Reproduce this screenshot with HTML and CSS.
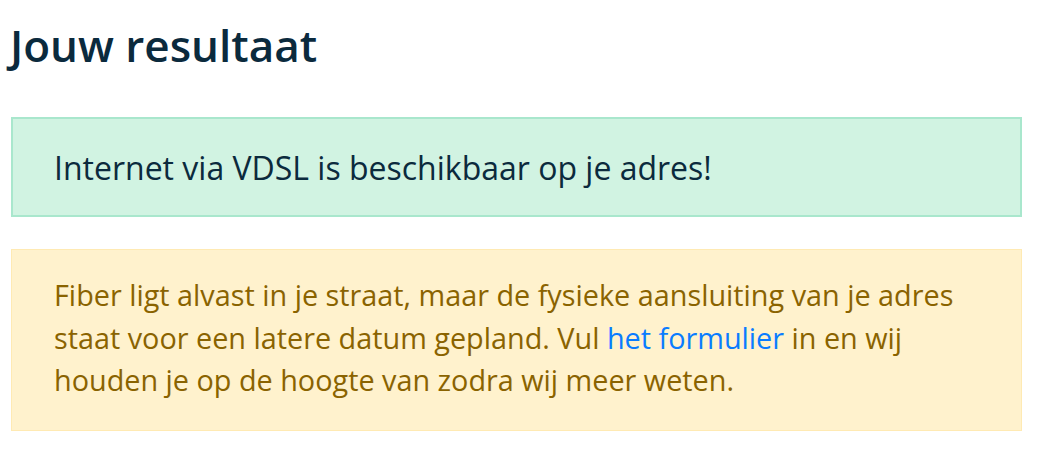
FILE: index.html
```html
<!DOCTYPE html>
<html lang="nl">
<head>
<meta charset="utf-8">
<title>Jouw resultaat</title>
<link rel="stylesheet" href="styles.css">
</head>
<body>
<main class="result">
  <h1 class="result-title">Jouw resultaat</h1>
  <div class="alert alert-success">Internet via VDSL is beschikbaar op je adres!</div>
  <div class="alert alert-warning">Fiber ligt alvast in je straat, maar de fysieke aansluiting van je adres staat voor een latere datum gepland. Vul <a href="#" class="alert-link">het formulier</a> in en wij houden je op de hoogte van zodra wij meer weten.</div>
</main>
</body>
</html>
```

FILE: styles.css
```css
html, body {
  margin: 0;
  padding: 0;
  background: #ffffff;
}

body {
  font-family: "Open Sans", "Noto Sans", sans-serif;
}

.result {
  display: flex;
  flex-direction: column;
  padding: 17px 22px 0 11px;
}

.result-title {
  margin: 0 0 0 -1px;
  font-size: 44px;
  line-height: 56px;
  font-weight: 600;
  color: #0b2a3d;
}

.alert {
  box-sizing: border-box;
}

.alert-success {
  margin-top: 44px;
  height: 100px;
  display: flex;
  align-items: center;
  padding: 0 41px;
  background: #d1f3e2;
  border: 2px solid #a9e7cd;
  color: #0b2a3d;
  font-size: 32px;
}

.alert-warning {
  margin-top: 32px;
  height: 182px;
  padding: 24px 42px;
  background: #fff2cd;
  border: 1px solid #ffeab3;
  color: #8a6300;
  font-size: 28.8px;
  line-height: 42.5px;
}

.alert-link {
  color: #0a7cff;
  text-decoration: none;
}
```
